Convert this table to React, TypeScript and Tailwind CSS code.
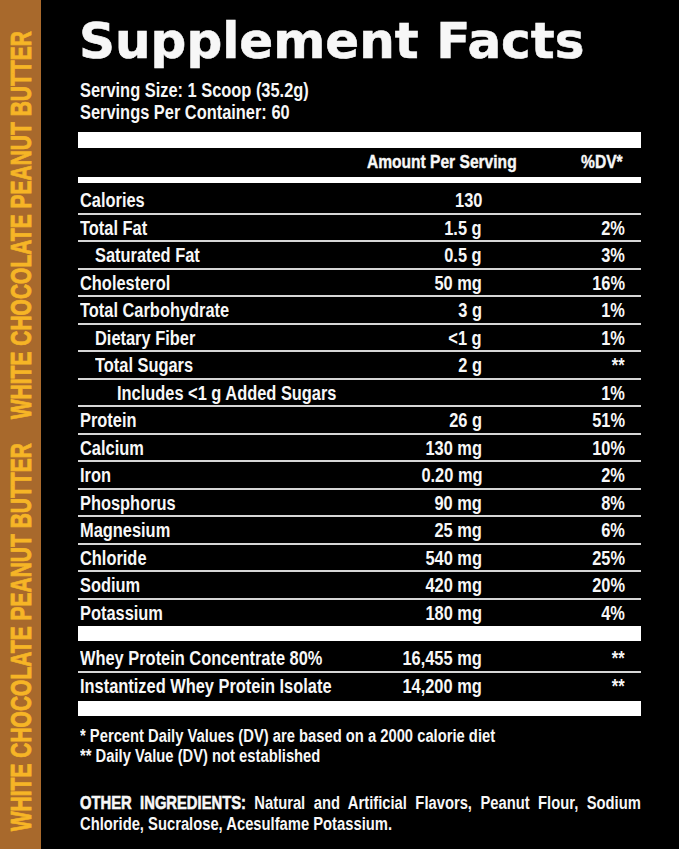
import React from 'react';

interface Row {
  label: string;
  amount: string;
  dv: string;
  indent?: number;
}

const rows: Row[] = [
  { label: 'Calories', amount: '130', dv: '' },
  { label: 'Total Fat', amount: '1.5 g', dv: '2%' },
  { label: 'Saturated Fat', amount: '0.5 g', dv: '3%', indent: 1 },
  { label: 'Cholesterol', amount: '50 mg', dv: '16%' },
  { label: 'Total Carbohydrate', amount: '3 g', dv: '1%' },
  { label: 'Dietary Fiber', amount: '<1 g', dv: '1%', indent: 1 },
  { label: 'Total Sugars', amount: '2 g', dv: '**', indent: 1 },
  { label: 'Includes <1 g Added Sugars', amount: '', dv: '1%', indent: 2 },
  { label: 'Protein', amount: '26 g', dv: '51%' },
  { label: 'Calcium', amount: '130 mg', dv: '10%' },
  { label: 'Iron', amount: '0.20 mg', dv: '2%' },
  { label: 'Phosphorus', amount: '90 mg', dv: '8%' },
  { label: 'Magnesium', amount: '25 mg', dv: '6%' },
  { label: 'Chloride', amount: '540 mg', dv: '25%' },
  { label: 'Sodium', amount: '420 mg', dv: '20%' },
  { label: 'Potassium', amount: '180 mg', dv: '4%' },
];

const blends: Row[] = [
  { label: 'Whey Protein Concentrate 80%', amount: '16,455 mg', dv: '**' },
  { label: 'Instantized Whey Protein Isolate', amount: '14,200 mg', dv: '**' },
];

const indentClass = (indent?: number) =>
  indent === 2 ? 'pl-[39px]' : indent === 1 ? 'pl-[17px]' : 'pl-[2px]';

// no condensed font installed, so squeeze Liberation Sans horizontally
const Cond: React.FC<{ children: React.ReactNode; right?: boolean }> = ({ children, right }) => (
  <span
    className={`inline-block shrink-0 whitespace-nowrap scale-x-[0.82] ${right ? 'origin-right' : 'origin-left'}`}
  >
    {children}
  </span>
);

const FlavorStrip: React.FC = () => (
  <div className="w-[41px] h-[849px] shrink-0 bg-[#a8692c] flex flex-col pt-[30px]">
    {[0, 1].map((i) => (
      <div
        key={i}
        className={`${i === 0 ? 'h-[391px] mb-[22px]' : 'h-[389px]'} flex items-center justify-center`}
      >
        <span className="[writing-mode:vertical-rl] rotate-180 scale-y-[0.7] whitespace-nowrap text-[30px] leading-[41px] font-bold text-[#f6b526] [-webkit-text-stroke:0.8px_#f6b526]">
          WHITE CHOCOLATE PEANUT BUTTER
        </span>
      </div>
    ))}
  </div>
);

const NutrientRow: React.FC<{ row: Row; className: string }> = ({ row, className }) => (
  <div className={`${className} flex items-center pr-[16px] text-[20px] font-bold`}>
    <span className={`flex-1 min-w-0 ${indentClass(row.indent)}`}>
      <Cond>{row.label}</Cond>
    </span>
    <span className="w-[150px] shrink-0 flex justify-end">
      <Cond right>{row.amount}</Cond>
    </span>
    <span className="w-[143px] shrink-0 flex justify-end">
      <Cond right>{row.dv}</Cond>
    </span>
  </div>
);

const App: React.FC = () => {
  return (
    <div
      className="w-[679px] h-[849px] bg-black text-[#f7f7f7] flex overflow-hidden"
      style={{ fontFamily: '"Liberation Sans", Arial, sans-serif' }}
    >
      <FlavorStrip />

      <div className="w-[563px] ml-[37px] flex flex-col">
        {/* Title */}
        <h1 className="mt-[16px] pl-[1px] text-[50px] leading-[50px] font-bold whitespace-nowrap font-['DejaVu_Sans',sans-serif] [-webkit-text-stroke:0.6px_#f7f7f7]">
          Supplement Facts
        </h1>

        {/* Serving info */}
        <div className="mt-[13px] pl-[2px] text-[20px] leading-[22px] font-bold">
          <div><Cond>Serving Size: 1 Scoop (35.2g)</Cond></div>
          <div><Cond>Servings Per Container: 60</Cond></div>
        </div>

        {/* Header */}
        <div className="mt-[9px] h-[16px] bg-white" />
        <div className="h-[29px] flex items-center justify-end pr-[18px] text-[19px] font-bold [-webkit-text-stroke:0.4px_#f7f7f7]">
          <span className="w-[149px] flex justify-end"><Cond right>Amount Per Serving</Cond></span>
          <span className="w-[106px] flex justify-end"><Cond right>%DV*</Cond></span>
        </div>
        <div className="h-[6px] bg-white" />

        {/* Nutrients */}
        <div className="pt-[4px] pb-[1px]">
          {rows.map((row, i) => (
            <div key={row.label}>
              <NutrientRow row={row} className={i % 2 ? 'h-[25px]' : 'h-[26px]'} />
              {i < rows.length - 1 && <div className="h-[2px] bg-[#d6d6d6]" />}
            </div>
          ))}
        </div>

        <div className="h-[15px] bg-white" />

        {/* Blend */}
        <div className="pt-[4px] pb-[2px]">
          {blends.map((row, i) => (
            <div key={row.label}>
              <NutrientRow row={row} className="h-[26px]" />
              {i < blends.length - 1 && <div className="h-[2px] bg-[#d6d6d6]" />}
            </div>
          ))}
        </div>

        <div className="h-[15px] bg-white" />

        {/* Footnotes */}
        <div className="mt-[10px] pl-[2px] text-[18px] leading-[20px] font-bold">
          <div><Cond>* Percent Daily Values (DV) are based on a 2000 calorie diet</Cond></div>
          <div><Cond>** Daily Value (DV) not established</Cond></div>
        </div>

        <div className="mt-[27px] pl-[2px]">
          <p className="w-[684px] origin-left scale-x-[0.82] text-[18px] leading-[21px] font-bold text-justify">
            <span className="[-webkit-text-stroke:0.6px_#f7f7f7]">OTHER INGREDIENTS:</span> Natural and
            Artificial Flavors, Peanut Flour, Sodium Chloride, Sucralose, Acesulfame Potassium.
          </p>
        </div>
      </div>
    </div>
  );
};

export default App;
